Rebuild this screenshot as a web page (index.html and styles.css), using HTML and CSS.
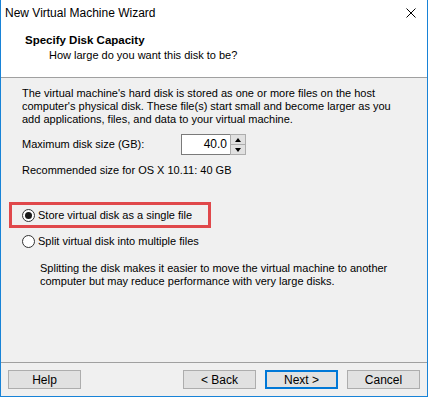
FILE: index.html
```html
<!DOCTYPE html>
<html lang="en">
<head>
  <meta charset="UTF-8"/>
  <title>New Virtual Machine Wizard</title>
  <link rel="stylesheet" href="styles.css">
</head>
<body>
  <div class="window">

    <!-- title bar -->
    <div class="titlebar">
      <span class="title-text">New Virtual Machine Wizard</span>
      <svg class="close" width="10" height="10" viewBox="0 0 10 10">
        <path d="M0.5 0.5 L9.5 9.5 M9.5 0.5 L0.5 9.5" stroke="#000" stroke-width="1" fill="none"/>
      </svg>
    </div>

    <!-- page header -->
    <div class="header">
      <div class="header-title">Specify Disk Capacity</div>
      <div class="header-sub">How large do you want this disk to be?</div>
    </div>

    <div class="content">
      <p class="intro">The virtual machine's hard disk is stored as one or more files on the host computer's physical disk. These file(s) start small and become larger as you add applications, files, and data to your virtual machine.</p>

      <div class="size-row">
        <span class="size-label">Maximum disk size (GB):</span>
        <div class="spin">
          <div class="spin-input">40.0</div>
          <div class="spin-btns">
            <div class="spin-btn"><span class="arrow up"></span></div>
            <div class="spin-btn"><span class="arrow down"></span></div>
          </div>
        </div>
      </div>

      <p class="recommended">Recommended size for OS X 10.11: 40 GB</p>

      <div class="options">
        <label class="radio highlight">
          <span class="radio-dot checked"></span>
          <span>Store virtual disk as a single file</span>
        </label>
        <label class="radio">
          <span class="radio-dot"></span>
          <span>Split virtual disk into multiple files</span>
        </label>
        <p class="note">Splitting the disk makes it easier to move the virtual machine to another computer but may reduce performance with very large disks.</p>
      </div>
    </div>

    <div class="footer">
      <button class="btn">Help</button>
      <button class="btn back">&lt; Back</button>
      <button class="btn primary">Next &gt;</button>
      <button class="btn">Cancel</button>
    </div>

  </div>
</body>
</html>
```

FILE: styles.css
```css
* {
  margin: 0; padding: 0;
  box-sizing: border-box;
}

body {
  font-family: "Liberation Sans", Arial, sans-serif;
  font-size: 11px;
  color: #000;
  background: #fff;
}

.window {
  width: 428px;
  height: 397px;
  border: 1px solid #1883d7;
  border-top: none;
  display: flex;
  flex-direction: column;
  background: #f0f0f0;
}

.titlebar {
  height: 26px;
  background: #fff;
  display: flex;
  align-items: center;
  justify-content: space-between;
  padding: 0 11px 0 4px;
}

.title-text {
  font-size: 12px;
  line-height: 26px;
}

.close {
  display: block;
  margin-top: -1px;
}

.header {
  background: #fff;
  height: 52px;
  padding: 7px 0 0 24px;
  border-bottom: 1px solid #a0a0a0;
  line-height: 15px;
}

.header-title {
  font-weight: bold;
  font-size: 11.5px;
}

.header-sub {
  padding-left: 24px;
}

.content {
  flex: 1;
  padding: 9px 10px 0 21px;
  line-height: 13px;
}

.intro {
  width: 380px;
}

.size-row {
  display: flex;
  align-items: center;
  margin-top: 8px;
  height: 21px;
}

.size-label {
  width: 159px;
}

.spin {
  display: flex;
  height: 21px;
}

.spin-input {
  width: 50px;
  height: 21px;
  background: #fff;
  border: 1px solid #7a7a7a;
  text-align: right;
  padding-right: 3px;
  line-height: 19px;
  font-size: 12px;
}

.spin-btns {
  display: flex;
  flex-direction: column;
  width: 16px;
  margin-left: -1px;
}

.spin-btn {
  flex: 1;
  border: 1px solid #adadad;
  background: #e1e1e1;
  display: flex;
  align-items: center;
  justify-content: center;
}

.spin-btn + .spin-btn {
  border-top: none;
}

.arrow {
  width: 0; height: 0;
  border-left: 3px solid transparent;
  border-right: 3px solid transparent;
}

.arrow.up { border-bottom: 4px solid #000; }
.arrow.down { border-top: 4px solid #000; }

.recommended {
  margin-top: 9px;
}

.options {
  margin-top: 25px;
  margin-left: -13px;
}

.radio {
  display: flex;
  align-items: center;
  height: 26px;
  padding-left: 13px;
  gap: 3px;
}

.radio.highlight {
  width: 202px;
  border: 3px solid #e0484b;
  padding-left: 10px;
}

.radio-dot {
  width: 13px;
  height: 13px;
  border-radius: 50%;
  border: 1px solid #333;
  background: #fff;
  display: flex;
  align-items: center;
  justify-content: center;
}

.radio-dot.checked::after {
  content: "";
  width: 7px;
  height: 7px;
  border-radius: 50%;
  background: #1a1a1a;
}

.note {
  margin: 8px 0 0 31px;
}

.footer {
  height: 34px;
  border-top: 1px solid #a0a0a0;
  display: flex;
  align-items: flex-start;
  gap: 9px;
  padding: 7px 7px 0 7px;
}

.btn {
  width: 73px;
  height: 19px;
  font-family: inherit;
  font-size: 12px;
  background: #e1e1e1;
  border: 1px solid #adadad;
  color: #000;
}

.btn.back {
  margin-left: auto;
}

.btn.primary {
  border: 2px solid #0078d7;
}
```
